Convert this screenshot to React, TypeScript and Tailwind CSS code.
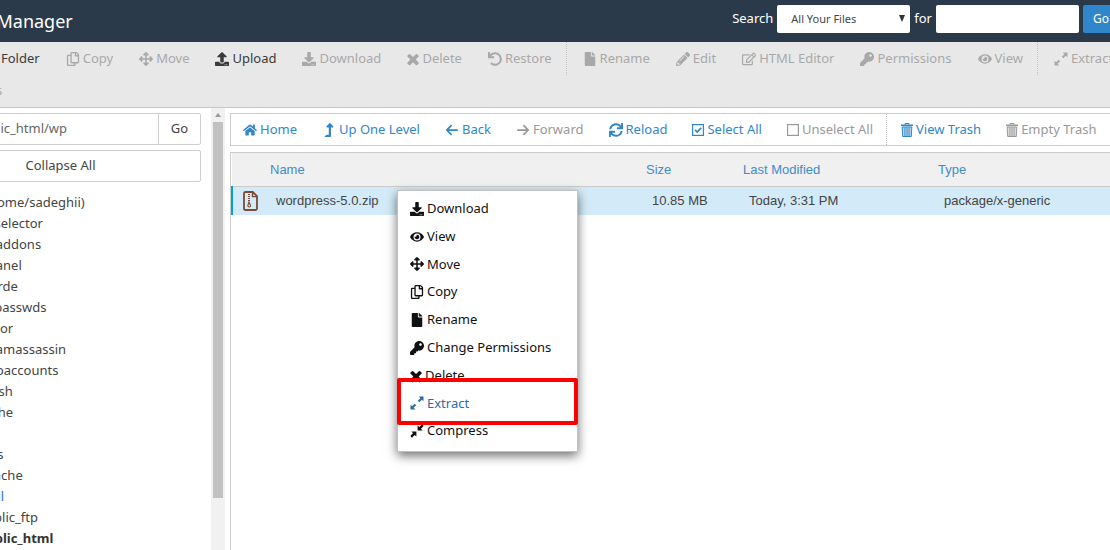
import type { ReactNode } from 'react'
import {
  FaArrowsAlt,
  FaDownload,
  FaEye,
  FaFile,
  FaHome,
  FaKey,
  FaLevelUpAlt,
  FaPencilAlt,
  FaPlus,
  FaRegCopy,
  FaRegEdit,
  FaSync,
  FaUndo,
  FaUpload,
} from 'react-icons/fa'
import { FaArrowLeft, FaArrowRight } from 'react-icons/fa6'

const TimesIcon = () => (
  <svg viewBox="270 170 1252 1452" fill="currentColor" aria-hidden="true">
    <path d="M1490 1322q0 40-28 68l-136 136q-28 28-68 28t-68-28l-294-294-294 294q-28 28-68 28t-68-28l-136-136q-28-28-28-68t28-68l294-294-294-294q-28-28-28-68t28-68l136-136q28-28 68-28t68 28l294 294 294-294q28-28 68-28t68 28l136 136q28 28 28 68t-28 68l-294 294 294 294q28 28 28 68z" />
  </svg>
)

const ExtractIcon = () => (
  <svg viewBox="0 0 14 14" fill="currentColor" aria-hidden="true">
    <path d="M8.8 0.5H13.5V5.2L11.9 3.7L9.3 6.3L7.8 4.8L10.4 2.2Z" />
    <path d="M5.2 13.5H0.5V8.8L2.1 10.3L4.7 7.7L6.2 9.2L3.6 11.8Z" />
  </svg>
)

const CompressIcon = () => (
  <svg viewBox="0 0 14 14" fill="currentColor" aria-hidden="true">
    <path d="M7.6 6.4V1.4L9.3 3L12 0.3L13.7 2L11 4.7L12.6 6.4Z" />
    <path d="M6.4 7.6V12.6L4.7 11L2 13.7L0.3 12L3 9.3L1.4 7.6Z" />
  </svg>
)

const TrashIcon = () => (
  <svg viewBox="0 0 12 14" fill="none" stroke="currentColor" aria-hidden="true">
    <path d="M4 1.6V0.5H8V1.6" />
    <path d="M0 2.3H12" strokeWidth="1.6" />
    <path d="M1.2 4H10.8L10.3 13.5H1.7Z" fill="currentColor" fillOpacity="0.35" />
    <path d="M3.9 4.5V13M6 4.5V13M8.1 4.5V13" strokeWidth="0.9" />
  </svg>
)

const CheckedBoxIcon = () => (
  <svg viewBox="0 -1 12 14" fill="none" stroke="currentColor" aria-hidden="true">
    <rect x="0.6" y="0.6" width="10.8" height="10.8" strokeWidth="1.2" />
    <path d="M3 5.8L5.2 8L9.2 3.8" strokeWidth="1.7" />
  </svg>
)

const EmptyBoxIcon = () => (
  <svg viewBox="0 -1 12 14" fill="none" stroke="currentColor" aria-hidden="true">
    <rect x="0.6" y="0.6" width="10.8" height="10.8" strokeWidth="1.2" />
  </svg>
)

const ZipIcon = () => (
  <svg viewBox="0 0 15 20" width="15" height="20" fill="none" stroke="#7a4a35" aria-hidden="true">
    <path d="M2.5 1H9.8L14 5.2V17.5Q14 19 12.5 19H2.5Q1 19 1 17.5V2.5Q1 1 2.5 1Z" strokeWidth="1.8" />
    <path d="M9.5 1.5V5.6H13.8" strokeWidth="1.4" />
    <path d="M6 3V11" strokeWidth="2" strokeDasharray="1 1" />
    <path d="M6 11L4.8 14.6Q4.8 16 6.2 16T7.6 14.6Z" strokeWidth="1.1" />
  </svg>
)

type Action = { label: string; icon: ReactNode; on?: boolean; divider?: boolean }

const fileActions: Action[] = [
  { label: 'Folder', icon: <FaPlus />, on: true },
  { label: 'Copy', icon: <FaRegCopy /> },
  { label: 'Move', icon: <FaArrowsAlt /> },
  { label: 'Upload', icon: <FaUpload />, on: true },
  { label: 'Download', icon: <FaDownload /> },
  { label: 'Delete', icon: <TimesIcon /> },
  { label: 'Restore', icon: <FaUndo /> },
  { label: 'Rename', icon: <FaFile />, divider: true },
  { label: 'Edit', icon: <FaPencilAlt /> },
  { label: 'HTML Editor', icon: <FaRegEdit /> },
  { label: 'Permissions', icon: <FaKey /> },
  { label: 'View', icon: <FaEye /> },
  { label: 'Extract', icon: <ExtractIcon />, divider: true },
]

const navActions: Action[] = [
  { label: 'Home', icon: <FaHome />, on: true },
  { label: 'Up One Level', icon: <FaLevelUpAlt />, on: true },
  { label: 'Back', icon: <FaArrowLeft />, on: true },
  { label: 'Forward', icon: <FaArrowRight /> },
  { label: 'Reload', icon: <FaSync />, on: true },
  { label: 'Select All', icon: <CheckedBoxIcon />, on: true },
  { label: 'Unselect All', icon: <EmptyBoxIcon /> },
  { label: 'View Trash', icon: <TrashIcon />, on: true, divider: true },
  { label: 'Empty Trash', icon: <TrashIcon /> },
]

const menuItems: Action[] = [
  { label: 'Download', icon: <FaDownload /> },
  { label: 'View', icon: <FaEye /> },
  { label: 'Move', icon: <FaArrowsAlt /> },
  { label: 'Copy', icon: <FaRegCopy /> },
  { label: 'Rename', icon: <FaFile /> },
  { label: 'Change Permissions', icon: <FaKey /> },
  { label: 'Delete', icon: <TimesIcon /> },
  { label: 'Extract', icon: <ExtractIcon />, on: true },
  { label: 'Compress', icon: <CompressIcon /> },
]

const folders = [
  '.cl.selector',
  '.cpaddons',
  '.cpanel',
  '.horde',
  '.htpasswds',
  '.razor',
  '.spamassassin',
  '.subaccounts',
  '.trash',
  'cache',
  'etc',
  'logs',
  'lscache',
  'mail',
  'public_ftp',
  'public_html',
]

// icons keep their own aspect ratio at one shared height
const iconButton = 'flex items-center gap-[3px] whitespace-nowrap [&>svg]:h-[14px] [&>svg]:w-auto'

function Header() {
  return (
    <header className="flex h-[42px] items-center justify-between bg-[#2a3a4b] pr-[7px] text-white">
      <h1 className="pl-[51px] text-lg">File Manager</h1>
      <form className="flex items-center pb-1">
        <label htmlFor="scope">Search</label>
        <div className="relative ml-1">
          <select
            id="scope"
            className="block h-7 w-[133px] appearance-none rounded-xs bg-white pl-[14px] text-[11px] text-[#444]"
          >
            <option>All Your Files</option>
          </select>
          <svg viewBox="0 0 6 7" className="pointer-events-none absolute top-[10px] right-[5px] h-[7px] w-[6px]" fill="#333">
            <path d="M0 0H6L3 7Z" />
          </svg>
        </div>
        <label htmlFor="query" className="mx-1">for</label>
        <input id="query" type="text" className="h-7 w-[143px] rounded-xs bg-white px-2 text-[#444]" />
        <button type="button" className="ml-1 h-7 rounded-xs bg-[#2f86cb] px-[10px] text-xs">Go</button>
      </form>
    </header>
  )
}

function Toolbar() {
  return (
    <div className="border-b border-[#c5c5c9] bg-[#e8e8e8] text-[#a8a8a8]">
      <div className="flex gap-[2px] pl-[60px]">
        {fileActions.map(({ label, icon, on, divider }) => (
          <div key={label} className={divider ? 'flex border-l border-dotted border-[#c4c4c4] pl-1' : 'flex'}>
            <button type="button" className={`${iconButton} h-[33px] px-3 ${on ? 'text-[#3a3a3a]' : ''}`}>
              {icon}
              {label}
            </button>
          </div>
        ))}
      </div>
      <div className="flex">
        <button type="button" className={`${iconButton} h-8 px-3`}>
          <CompressIcon />
          Compress
        </button>
      </div>
    </div>
  )
}

function Sidebar() {
  return (
    <aside className="flex w-[313px] shrink-0 overflow-hidden text-[#444]">
      <div className="min-w-0 flex-1 pt-[5px] pr-[10px] pl-2">
        <div className="flex h-8 rounded-xs border border-[#cfcfcf]">
          <input
            aria-label="Path"
            defaultValue="public_html/wp"
            className="min-w-0 flex-1 pl-[52px] text-[#666]"
          />
          <button type="button" className="w-[42px] border-l border-[#cfcfcf]">Go</button>
        </div>
        <button type="button" className="mt-[5px] block h-8 w-full rounded-xs border border-[#cfcfcf]">
          Collapse All
        </button>
        <ul className="mt-[10px] pl-[58px] leading-[21px]">
          <li className="whitespace-nowrap">
            <span className="-ml-[6px]">/ (/home/sadeghii)</span>
            <ul>
              {folders.map((name) => (
                <li
                  key={name}
                  className={name === 'public_html' ? 'font-bold text-[#333]' : name === 'mail' ? 'text-[#2b6cc4]' : ''}
                >
                  {name}
                </li>
              ))}
            </ul>
          </li>
        </ul>
      </div>
      <div className="flex w-[14px] flex-col items-center bg-[#f1f1f1]">
        <svg viewBox="0 0 6 4" className="mt-[5px] mb-[5px] h-1 w-[6px]" fill="#999">
          <path d="M0 4L3 0L6 4Z" />
        </svg>
        <div className="h-[85%] w-[10px] bg-[#c1c1c1]" />
      </div>
    </aside>
  )
}

function ContextMenu() {
  return (
    <ul
      role="menu"
      className="absolute top-[37px] left-[166px] flex h-[262px] w-[181px] flex-col border border-[#c4c2b8] bg-white pt-1 pb-[6px] text-[#111] shadow-[0_4px_10px_rgba(0,0,0,0.55)]"
    >
      {menuItems.map(({ label, icon, on }) => (
        <li key={label} role="none" className="relative flex flex-1">
          <button
            type="button"
            role="menuitem"
            className={`${iconButton} w-full pl-3 ${on ? 'text-[#2b6ca3]' : ''}`}
          >
            {icon}
            {label}
          </button>
          {on && <span className="pointer-events-none absolute -inset-x-px -top-[11px] -bottom-2 rounded-xs border-4 border-[#f00]" />}
        </li>
      ))}
    </ul>
  )
}

function FileTable() {
  return (
    <div className="relative mt-[6px] flex-1 border-x border-t border-[#ccc]">
      <table className="w-full table-fixed text-left font-['Liberation_Sans',Arial,sans-serif]">
        <colgroup>
          <col className="w-[31px]" />
          <col />
          <col className="w-[97px]" />
          <col className="w-[195px]" />
          <col className="w-[186px]" />
        </colgroup>
        <thead>
          <tr className="h-[33px] border-b border-[#ccc] bg-[#f0f0f0] text-[#428bca]">
            <th />
            <th className="pl-[7px] font-normal">Name</th>
            <th className="pl-[7px] font-normal">Size</th>
            <th className="pl-[7px] font-normal">Last Modified</th>
            <th className="pl-[7px] font-normal">Type</th>
          </tr>
        </thead>
        <tbody>
          <tr className="h-[29px] bg-[#d3ebf8] text-[#444]">
            <td className="border-l-2 border-[#049cdb] pl-[10px]">
              <ZipIcon />
            </td>
            <td className="pl-[13px]">wordpress-5.0.zip</td>
            <td className="pl-[13px]">10.85 MB</td>
            <td className="pl-[13px]">Today, 3:31 PM</td>
            <td className="pl-[13px]">package/x-generic</td>
          </tr>
        </tbody>
      </table>
      <ContextMenu />
    </div>
  )
}

export default function App() {
  return (
    <div className="h-screen overflow-hidden bg-white font-['Noto_Sans','Open_Sans',sans-serif] text-[13px]">
      <div className="-mr-4 -ml-[88px] flex h-full flex-col">
        <Header />
        <Toolbar />
        <div className="flex min-h-0 flex-1">
          <Sidebar />
          <main className="flex min-w-0 flex-1 flex-col pt-[5px] pr-2 pl-[5px]">
            <nav className="flex h-[33px] gap-px border border-[#ccc] text-[#999]">
              {navActions.map(({ label, icon, on, divider }) => (
                <div key={label} className={divider ? 'flex border-l border-dotted border-[#bbb] pl-[2px]' : 'flex'}>
                  <button type="button" className={`${iconButton} px-3 ${on ? 'text-[#2f86cb]' : ''}`}>
                    {icon}
                    {label}
                  </button>
                </div>
              ))}
            </nav>
            <FileTable />
          </main>
        </div>
      </div>
    </div>
  )
}
